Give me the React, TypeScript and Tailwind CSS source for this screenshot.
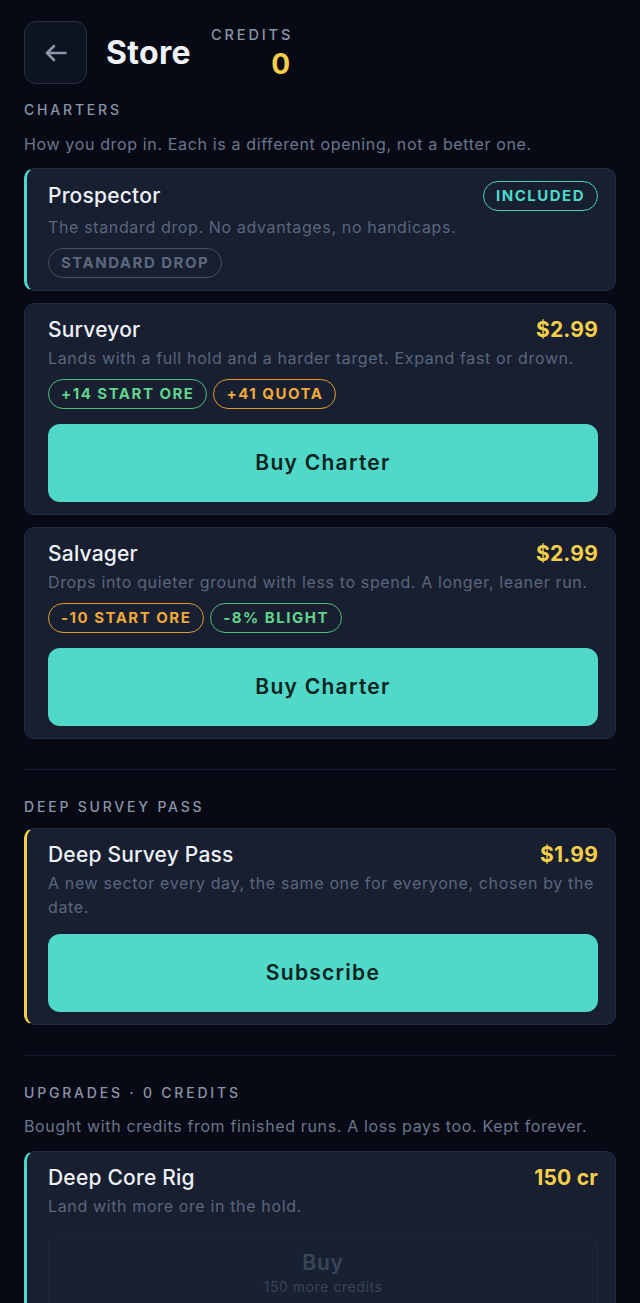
type Tag = { text: string; tone: "green" | "orange" | "gray" };

const tagTone = {
  green: "border-[#4fbf78] text-[#63d48d]",
  orange: "border-[#e39b2f] text-[#f1a93a]",
  gray: "border-[#465064] text-[#5d687e]",
};

function Badge({ tag }: { tag: Tag }) {
  return (
    <span
      className={`inline-flex h-[30px] items-center rounded-full border-[1.5px] px-[12px] text-[15px] font-bold tracking-[0.1em] ${tagTone[tag.tone]}`}
    >
      {tag.text}
    </span>
  );
}

function Card({
  title,
  price,
  desc,
  accent,
  tags,
  badge,
  children,
}: {
  title: string;
  price?: string;
  desc: string;
  accent?: string;
  tags?: Tag[];
  badge?: string;
  children?: React.ReactNode;
}) {
  return (
    <div
      className={`rounded-[10px] border border-[#232c40] bg-[#171f31] pt-[12px] pb-[12px] pr-[17px] ${
        accent ? `border-l-[3px] pl-[21px] ${accent}` : "pl-[23px]"
      }`}
    >
      <div className={`flex items-center justify-between ${badge ? "h-[30px]" : "h-[28px]"}`}>
        <span className="text-[21px] font-medium tracking-[0.01em] text-[#eef1f6]">{title}</span>
        {price && <span className="text-[21px] font-bold tracking-[0.01em] text-[#f5cf4b]">{price}</span>}
        {badge && (
          <span className="inline-flex h-[30px] items-center rounded-full border-[1.5px] border-[#46cfc0] px-[12px] text-[15px] font-bold tracking-[0.1em] text-[#4fd8c9]">
            {badge}
          </span>
        )}
      </div>
      <p className={`${badge ? "mt-[4px]" : "mt-[2px]"} text-[16px] leading-[24px] tracking-[0.04em] text-[#5b667d]`}>
        {desc}
      </p>
      {tags && (
        <div className="mt-[9px] flex gap-[6px]">
          {tags.map((t) => (
            <Badge key={t.text} tag={t} />
          ))}
        </div>
      )}
      {children}
    </div>
  );
}

function BuyButton({ label }: { label: string }) {
  return (
    <button className="mt-[15px] flex h-[78px] w-full items-center justify-center rounded-[12px] bg-[#50d8c9] text-[21px] font-semibold tracking-[0.06em] text-[#0c2220]">
      {label}
    </button>
  );
}

function SectionLabel({ children }: { children: React.ReactNode }) {
  return <div className="text-[14px] leading-[20px] font-medium tracking-[0.2em] text-[#8a94a8]">{children}</div>;
}

export default function App() {
  return (
    <div
      className="min-h-screen bg-[#070a14] px-6 pt-[21px] pb-10"
      style={{ fontFamily: "Inter, 'Noto Sans', sans-serif" }}
    >
      <div className="flex items-center">
        <button className="flex h-[63px] w-[63px] items-center justify-center rounded-[12px] border border-[#263047] bg-[#0e1320]">
          <svg width="22" height="18" viewBox="0 0 22 18" fill="none" stroke="#8c96aa" strokeWidth="2.6" strokeLinecap="round" strokeLinejoin="round">
            <path d="M20.5 9H2M9 2L2 9l7 7" />
          </svg>
        </button>
        <h1 className="ml-[19px] text-[32px] font-bold tracking-[0.01em] text-[#eef1f6]">Store</h1>
        <div className="ml-[20px] flex flex-col items-end">
          <span className="-mr-[3px] text-[14.5px] leading-[20px] font-medium tracking-[0.2em] text-[#8a94a8]">CREDITS</span>
          <span className="mt-[2px] text-[28px] leading-[34px] font-bold text-[#f5cf4b]">0</span>
        </div>
      </div>

      <div className="mt-[16px]">
        <SectionLabel>CHARTERS</SectionLabel>
        <p className="mt-[12px] text-[16px] leading-[24px] tracking-[0.04em] text-[#6b768c]">
          How you drop in. Each is a different opening, not a better one.
        </p>
      </div>

      <div className="mt-[12px] flex flex-col gap-[12px]">
        <Card
          title="Prospector"
          badge="INCLUDED"
          accent="border-l-[#4fd8c9]"
          desc="The standard drop. No advantages, no handicaps."
          tags={[{ text: "STANDARD DROP", tone: "gray" }]}
        />
        <Card
          title="Surveyor"
          price="$2.99"
          desc="Lands with a full hold and a harder target. Expand fast or drown."
          tags={[
            { text: "+14 START ORE", tone: "green" },
            { text: "+41 QUOTA", tone: "orange" },
          ]}
        >
          <BuyButton label="Buy Charter" />
        </Card>
        <Card
          title="Salvager"
          price="$2.99"
          desc="Drops into quieter ground with less to spend. A longer, leaner run."
          tags={[
            { text: "-10 START ORE", tone: "orange" },
            { text: "-8% BLIGHT", tone: "green" },
          ]}
        >
          <BuyButton label="Buy Charter" />
        </Card>
      </div>

      <div className="mt-[30px] border-t border-[#161c2a]" />

      <div className="mt-[27px]">
        <SectionLabel>DEEP SURVEY PASS</SectionLabel>
      </div>
      <div className="mt-[11px]">
        <Card
          title="Deep Survey Pass"
          price="$1.99"
          accent="border-l-[#f5cf4b]"
          desc="A new sector every day, the same one for everyone, chosen by the date."
        >
          <BuyButton label="Subscribe" />
        </Card>
      </div>

      <div className="mt-[30px] border-t border-[#161c2a]" />

      <div className="mt-[27px]">
        <SectionLabel>UPGRADES · 0 CREDITS</SectionLabel>
        <p className="mt-[11px] text-[16px] leading-[24px] tracking-[0.04em] text-[#6b768c]">
          Bought with credits from finished runs. A loss pays too. Kept forever.
        </p>
      </div>
      <div className="mt-[13px]">
        <Card
          title="Deep Core Rig"
          price="150 cr"
          accent="border-l-[#4fd8c9]"
          desc="Land with more ore in the hold."
        >
          <button className="mt-[15px] flex w-full flex-col items-center rounded-[12px] border border-[#1f283a] bg-[#182134] pt-[15px] pb-[15px]">
            <span className="text-[21px] leading-[28px] font-semibold tracking-[0.04em] text-[#3b4558]">Buy</span>
            <span className="text-[14px] leading-[20px] tracking-[0.04em] text-[#384255]">150 more credits</span>
          </button>
        </Card>
      </div>
    </div>
  );
}
